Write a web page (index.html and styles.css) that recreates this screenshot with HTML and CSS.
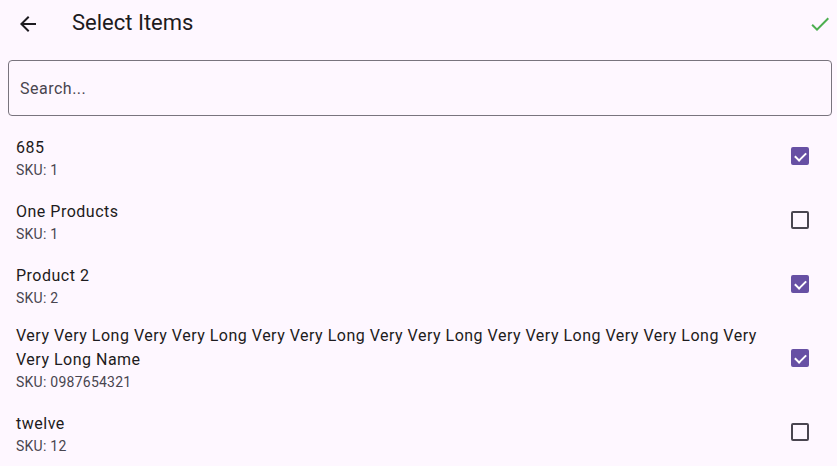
FILE: index.html
```html
<!DOCTYPE html>
<html lang="en">
<head>
    <meta charset="UTF-8">
    <meta name="viewport" content="width=device-width, initial-scale=1.0">
    <title>Select Items</title>
    <link rel="stylesheet" href="styles.css">
</head>
<body>
    <div class="app-bar">
        <button class="icon-button" aria-label="Back">
            <svg width="24" height="24" viewBox="0 0 24 24"><path d="M20 11H7.83l5.59-5.59L12 4l-8 8 8 8 1.41-1.41L7.83 13H20v-2z" fill="#1d1b20"/></svg>
        </button>
        <h1 class="title">Select Items</h1>
        <button class="icon-button done" aria-label="Done">
            <svg width="24" height="24" viewBox="0 0 24 24"><path d="M9 16.17L4.83 12l-1.42 1.41L9 19 21 7l-1.41-1.41z" fill="#4caf50"/></svg>
        </button>
    </div>

    <div class="search-wrap">
        <input class="search" placeholder="Search...">
    </div>

    <ul class="item-list">
        <li class="item">
            <div class="item-text">
                <div class="item-name">685</div>
                <div class="item-sku">SKU: 1</div>
            </div>
            <span class="check checked"></span>
        </li>
        <li class="item">
            <div class="item-text">
                <div class="item-name">One Products</div>
                <div class="item-sku">SKU: 1</div>
            </div>
            <span class="check"></span>
        </li>
        <li class="item">
            <div class="item-text">
                <div class="item-name">Product 2</div>
                <div class="item-sku">SKU: 2</div>
            </div>
            <span class="check checked"></span>
        </li>
        <li class="item three-line">
            <div class="item-text">
                <div class="item-name">Very Very Long Very Very Long Very Very Long Very Very Long Very Very Long Very Very Long Very Very Long Name</div>
                <div class="item-sku">SKU: 0987654321</div>
            </div>
            <span class="check checked"></span>
        </li>
        <li class="item">
            <div class="item-text">
                <div class="item-name">twelve</div>
                <div class="item-sku">SKU: 12</div>
            </div>
            <span class="check"></span>
        </li>
    </ul>
</body>
</html>
```

FILE: styles.css
```css
body {
    margin: 0;
    font-family: Roboto, "Noto Sans", sans-serif;
    background-color: #fef7ff;
    color: #1d1b20;
    overflow: hidden;
}
.app-bar {
    display: flex;
    align-items: center;
    height: 48px;
    padding: 0 5px 0 16px;
}
.icon-button {
    width: 24px;
    height: 24px;
    padding: 0;
    border: none;
    background: none;
    display: flex;
}
.title {
    flex: 1;
    margin: 0 0 2px 32px;
    font-size: 22px;
    font-weight: 400;
    line-height: 28px;
}
.search-wrap {
    padding: 12px 5px 10px 8px;
}
.search {
    display: block;
    width: 100%;
    box-sizing: border-box;
    height: 56px;
    padding: 0 11px;
    border: 1px solid #79747e;
    border-radius: 4px;
    background: transparent;
    font-family: inherit;
    font-size: 16px;
    letter-spacing: 0.5px;
    color: #1d1b20;
}
.search::placeholder {
    color: #49454f;
}
.item-list {
    list-style: none;
    margin: 0;
    padding: 0;
}
.item {
    display: flex;
    align-items: center;
    padding: 10px 28px 10px 16px;
}
.item.three-line {
    padding-top: 6px;
}
.item-text {
    flex: 1;
    padding-right: 29px;
}
.item-name {
    font-size: 16px;
    line-height: 24px;
    letter-spacing: 0.5px;
}
.item-sku {
    font-size: 14px;
    line-height: 20px;
    letter-spacing: 0.25px;
    color: #49454f;
}
.check {
    width: 18px;
    height: 18px;
    box-sizing: border-box;
    border: 2px solid #49454f;
    border-radius: 2px;
    position: relative;
    margin-bottom: 4px;
}
.three-line .check {
    margin-bottom: 0;
}
.check.checked {
    border-color: #6750a4;
    background-color: #6750a4;
}
.check.checked::after {
    content: "";
    position: absolute;
    left: 3px;
    top: 0px;
    width: 9px;
    height: 5px;
    border-left: 2px solid #fff;
    border-bottom: 2px solid #fff;
    transform: translate(-1px, 3px) rotate(-45deg);
    transform-origin: center;
}
```
